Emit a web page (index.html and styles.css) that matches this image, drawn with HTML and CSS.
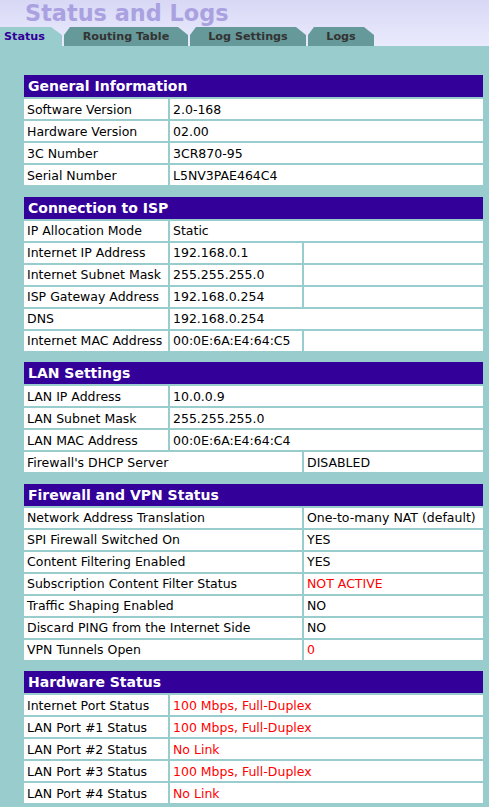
FILE: index.html
```html
<!DOCTYPE html>
<html lang="en">
<head>
<meta charset="utf-8">
<title>Status and Logs</title>
<link rel="stylesheet" href="styles.css">
</head>
<body>
<header class="top">
  <h1 class="title">Status and Logs</h1>
  <nav class="tabs">
    <span class="tab active">Status</span>
    <span class="tab tab-routing">Routing Table</span>
    <span class="tab tab-logset">Log Settings</span>
    <span class="tab tab-logs">Logs</span>
  </nav>
</header>
<main class="content">
  <section class="panel">
    <div class="head">General Information</div>
    <div class="cell">Software Version</div><div class="cell span2">2.0-168</div>
    <div class="cell">Hardware Version</div><div class="cell span2">02.00</div>
    <div class="cell">3C Number</div><div class="cell span2">3CR870-95</div>
    <div class="cell">Serial Number</div><div class="cell span2">L5NV3PAE464C4</div>
  </section>

  <section class="panel">
    <div class="head">Connection to ISP</div>
    <div class="cell">IP Allocation Mode</div><div class="cell span2">Static</div>
    <div class="cell">Internet IP Address</div><div class="cell">192.168.0.1</div><div class="cell"></div>
    <div class="cell">Internet Subnet Mask</div><div class="cell">255.255.255.0</div><div class="cell"></div>
    <div class="cell">ISP Gateway Address</div><div class="cell">192.168.0.254</div><div class="cell"></div>
    <div class="cell">DNS</div><div class="cell span2">192.168.0.254</div>
    <div class="cell">Internet MAC Address</div><div class="cell">00:0E:6A:E4:64:C5</div><div class="cell"></div>
  </section>

  <section class="panel">
    <div class="head">LAN Settings</div>
    <div class="cell">LAN IP Address</div><div class="cell span2">10.0.0.9</div>
    <div class="cell">LAN Subnet Mask</div><div class="cell span2">255.255.255.0</div>
    <div class="cell">LAN MAC Address</div><div class="cell span2">00:0E:6A:E4:64:C4</div>
    <div class="cell span2">Firewall's DHCP Server</div><div class="cell">DISABLED</div>
  </section>

  <section class="panel">
    <div class="head">Firewall and VPN Status</div>
    <div class="cell span2">Network Address Translation</div><div class="cell">One-to-many NAT (default)</div>
    <div class="cell span2">SPI Firewall Switched On</div><div class="cell">YES</div>
    <div class="cell span2">Content Filtering Enabled</div><div class="cell">YES</div>
    <div class="cell span2">Subscription Content Filter Status</div><div class="cell alert">NOT ACTIVE</div>
    <div class="cell span2">Traffic Shaping Enabled</div><div class="cell">NO</div>
    <div class="cell span2">Discard PING from the Internet Side</div><div class="cell">NO</div>
    <div class="cell span2">VPN Tunnels Open</div><div class="cell alert">0</div>
  </section>

  <section class="panel">
    <div class="head">Hardware Status</div>
    <div class="cell">Internet Port Status</div><div class="cell span2 alert">100 Mbps, Full-Duplex</div>
    <div class="cell">LAN Port #1 Status</div><div class="cell span2 alert">100 Mbps, Full-Duplex</div>
    <div class="cell">LAN Port #2 Status</div><div class="cell span2 alert">No Link</div>
    <div class="cell">LAN Port #3 Status</div><div class="cell span2 alert">100 Mbps, Full-Duplex</div>
    <div class="cell">LAN Port #4 Status</div><div class="cell span2 alert">No Link</div>
  </section>
</main>
</body>
</html>
```
FILE: styles.css
```css
* { box-sizing: border-box; }
html, body {
  margin: 0;
  padding: 0;
  background: #99cccc;
  font-family: "DejaVu Sans", Verdana, sans-serif;
}
.top {
  background: linear-gradient(to bottom, #d8d8f6 0%, #eaeafd 100%);
  height: 46px;
  overflow: hidden;
}
.title {
  margin: 0 0 0 25px;
  font-size: 22.4px;
  line-height: 26px;
  font-weight: bold;
  color: #aaa2e0;
  height: 27px;
  white-space: nowrap;
}
.tabs {
  display: flex;
  gap: 2px;
  height: 19px;
}
.tab {
  display: flex;
  align-items: center;
  justify-content: center;
  height: 19px;
  font-size: 11.2px;
  font-weight: bold;
  color: #333333;
  background: #669999;
  clip-path: polygon(6px 0, calc(100% - 10px) 0, 100% 8px, 100% 100%, 0 100%, 0 8px);
  white-space: nowrap;
}
.tab.active {
  width: 62px;
  justify-content: flex-start;
  padding-left: 4px;
  color: #330099;
  background: #99cccc;
  clip-path: polygon(0 0, calc(100% - 11px) 0, 100% 8px, 100% 100%, 0 100%);
}
.tab-routing { width: 124px; }
.tab-logset { width: 116px; }
.tab-logs { width: 66px; }

.content {
  padding: 29px 0 4px 24px;
  display: flex;
  flex-direction: column;
  gap: 11.5px;
}
.panel {
  width: 459px;
  display: grid;
  grid-template-columns: 144px 132px 179px;
  grid-template-rows: 22px;
  grid-auto-rows: 20px;
  gap: 2px;
}
.head {
  grid-column: 1 / -1;
  background: #330099;
  color: #ffffff;
  font-weight: bold;
  font-size: 14px;
  padding-left: 4px;
  display: flex;
  align-items: center;
  white-space: nowrap;
}
.cell {
  background: #ffffff;
  color: #000000;
  font-size: 12.5px;
  padding-left: 3px;
  display: flex;
  align-items: center;
  white-space: nowrap;
  overflow: hidden;
}
.span2 { grid-column: span 2; }
.alert { color: #ff0000; }
```
